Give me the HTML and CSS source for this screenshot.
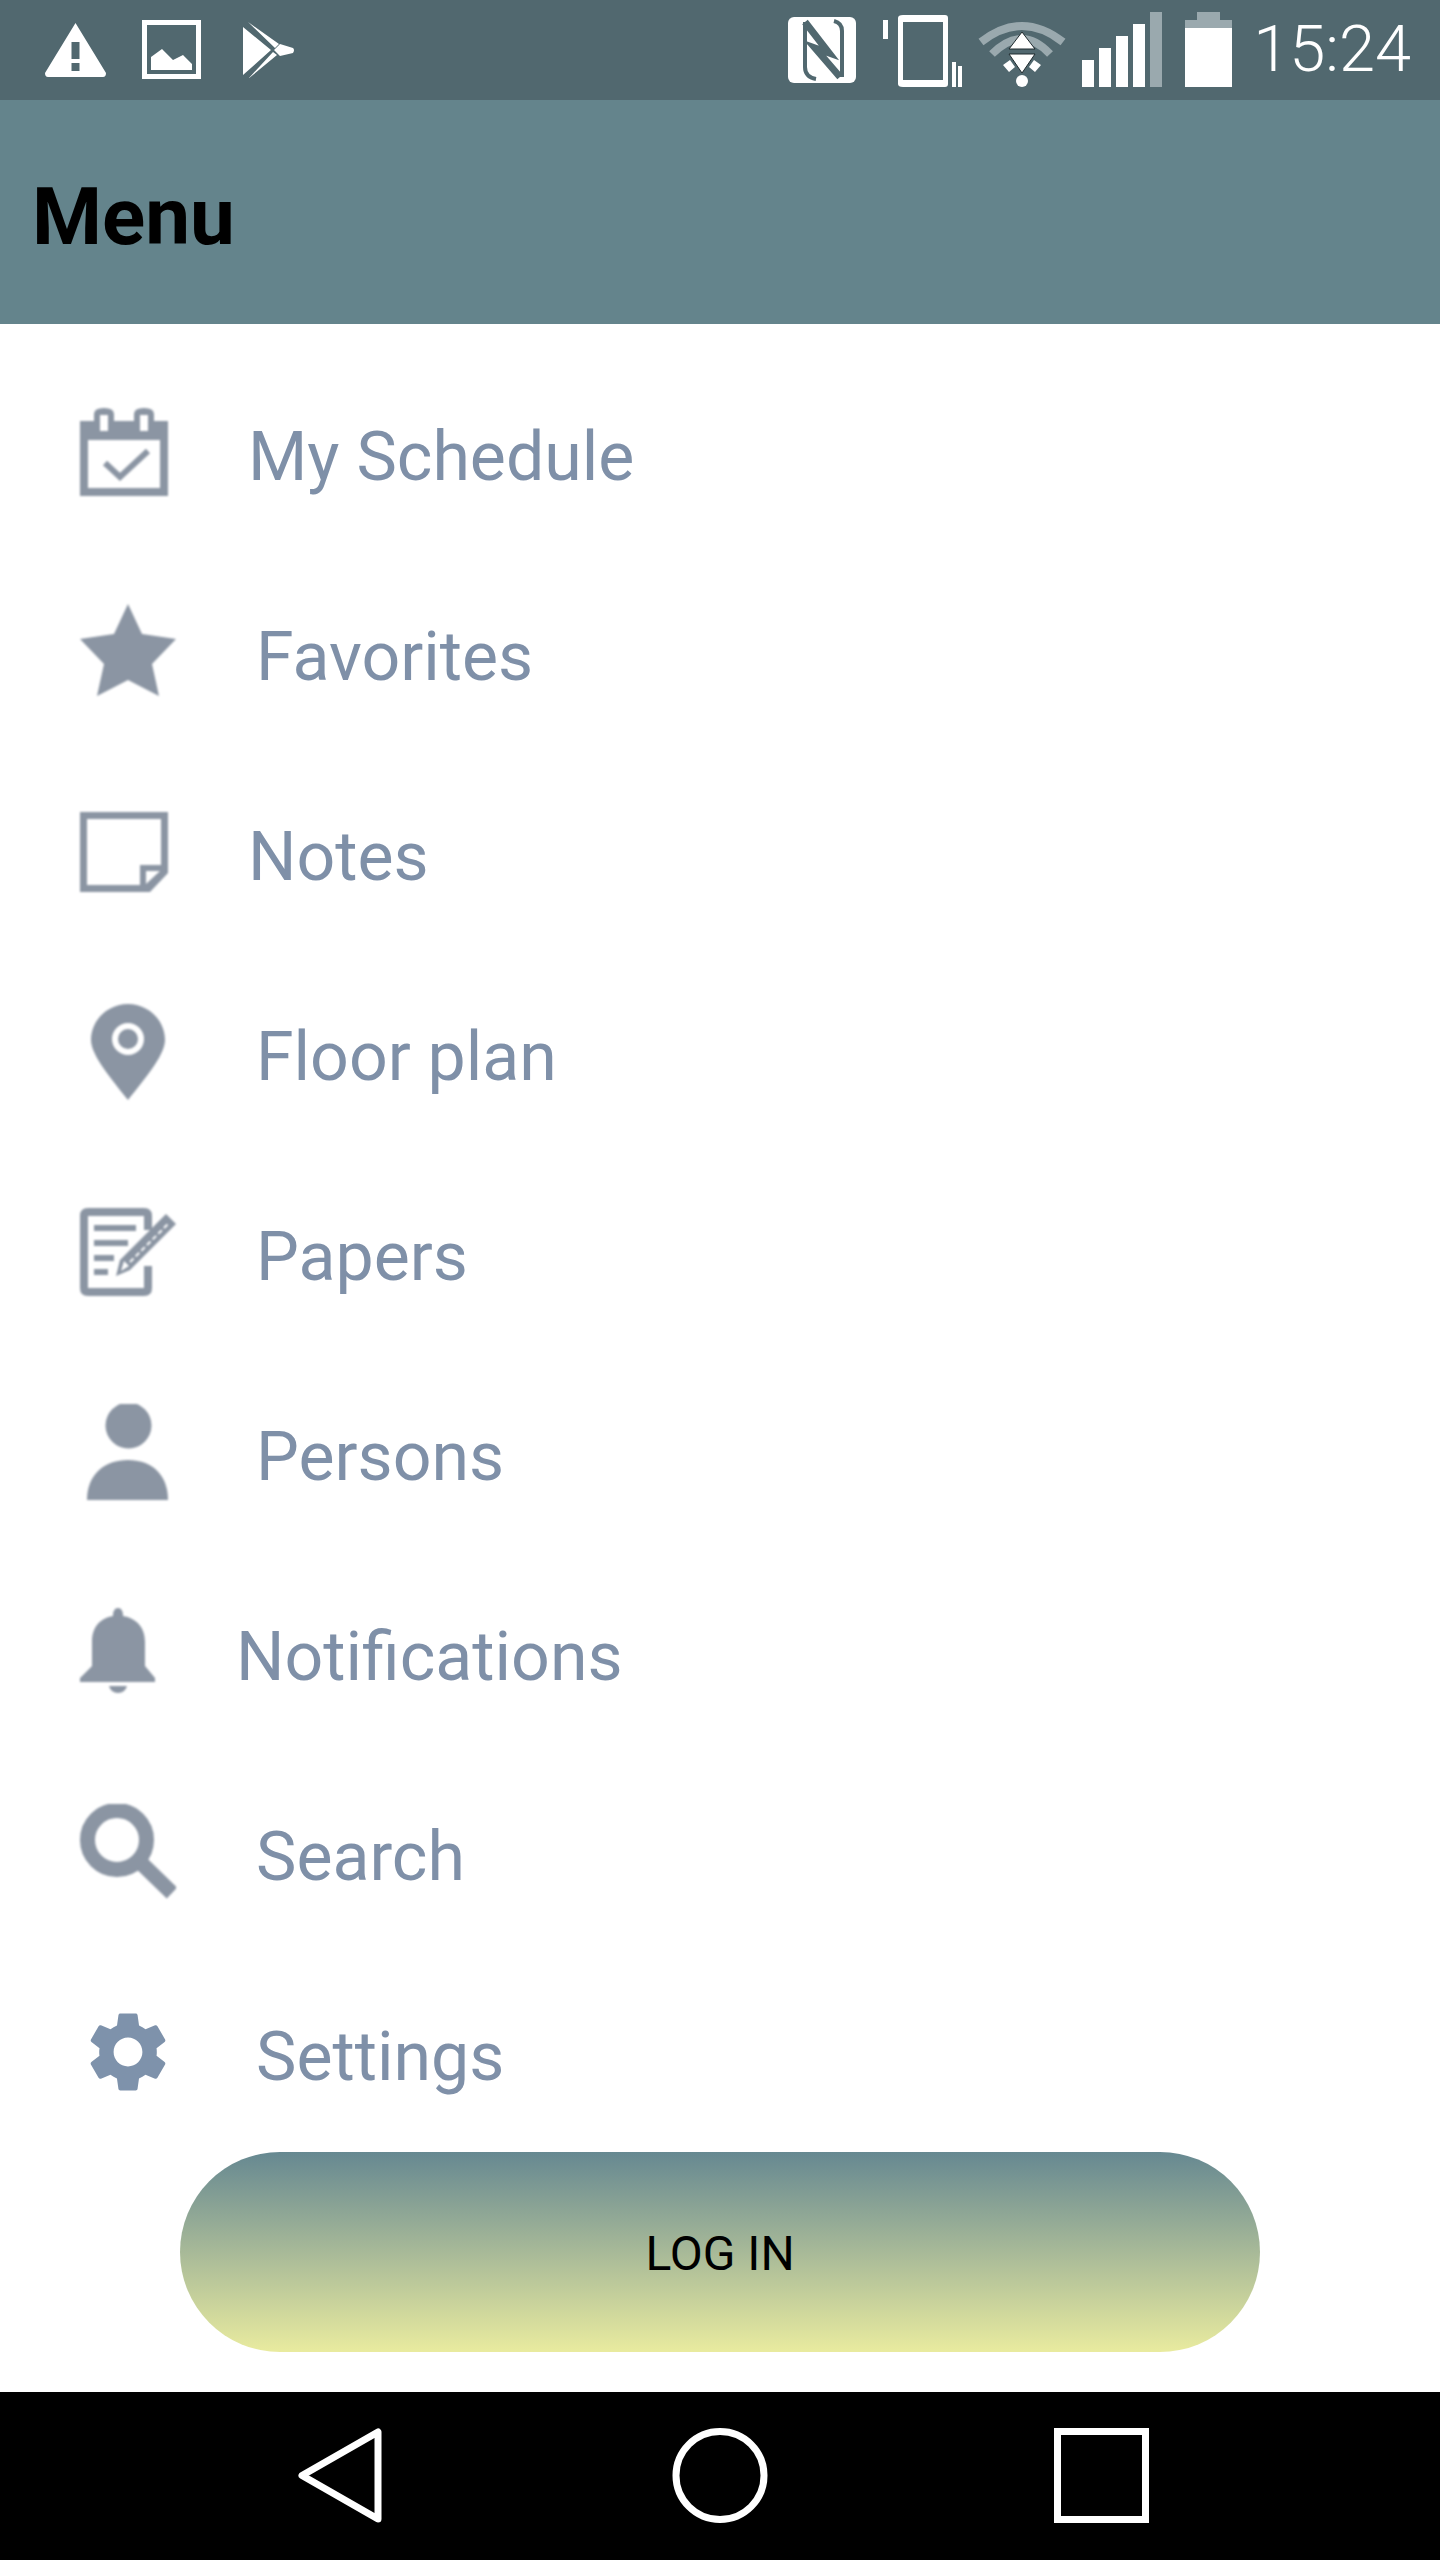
FILE: index.html
```html
<!DOCTYPE html>
<html>
<head>
  <title>Menu</title>
  <meta name="viewport" content="width=device-width, initial-scale=1.0">
  <link rel="stylesheet" href="styles.css">
</head>
<body>
  <div id="phone">
    <div class="status-bar">
      <div class="status-left">
        <svg class="st-warn" viewBox="0 0 61 54"><path fill="#fff" fill-rule="evenodd" d="M30.5 0 L61 50 Q61 54 58 54 L3 54 Q0 54 0 50 Z M26.500 19 L34.500 19 L34.500 36 L26.500 36 Z M26.500 40 L34.500 40 L34.500 48 L26.500 48 Z"/></svg>
        <svg class="st-pic" viewBox="0 0 59 59"><path fill="#fff" fill-rule="evenodd" d="M0 0H59V59H0Z M5 5V54H54V5Z"/><path fill="#fff" d="M9 50V37L20 29L31 40L41 35L50 44V50Z"/></svg>
        <svg class="st-play" viewBox="0 0 53 56"><path fill="#fff" d="M1 5 L29 28 L1 53 Z M6 0 L37 22 L33 26 Z M6 57 L35 33 L31 30 Z M38 22 L51 26 Q53 28 51 31 L38 34 L32 28 Z"/></svg>
      </div>
      <div class="status-right">
        <svg class="st-nfc" viewBox="0 0 68 66"><rect fill="#fff" width="68" height="66" rx="6"/><path fill="none" stroke="#51686f" stroke-width="4" d="M17 5V50Q17 60 28 62M46 4Q54 6 54 14V60"/><path fill="none" stroke="#51686f" stroke-width="7" d="M17 5L41 36L27 31L52 60"/></svg>
        <svg class="st-vib" viewBox="0 0 79 72"><path fill="#fff" fill-rule="evenodd" d="M20 0H62Q65 0 65 3V69Q65 72 62 72H20Q15 72 15 69V3Q15 0 20 0ZM20 7V65H60V7Z"/><path fill="#fff" d="M0 5H5V24H0Z M69 47H73V72H69Z M75 51H79V72H75Z"/></svg>
        <svg class="st-wifi" viewBox="0 0 90 66"><path fill="none" stroke="#9aa9ae" stroke-width="8" d="M4 21 Q45 -11 86 21 M15 33 Q45 3 73 33"/><path fill="#fff" stroke="#1f2a2e" stroke-width="1" d="M45 11 L58 28 H32Z M32 33 H58 L45 52Z"/><path fill="#fff" d="M26 44 L33 39 L38 46 L32 51Z M64 44 L57 39 L52 46 L58 51Z"/><circle fill="#fff" cx="45" cy="60" r="6"/></svg>
        <div class="st-signal">
          <span class="bar bar-1"></span>
          <span class="bar bar-2"></span>
          <span class="bar bar-3"></span>
          <span class="bar bar-4"></span>
          <span class="bar bar-5"></span>
        </div>
        <div class="st-battery">
          <span class="bat-cap"></span>
          <span class="bat-top"></span>
          <span class="bat-body"></span>
        </div>
        <span class="st-time">15:24</span>
      </div>
    </div>

    <div class="app-header">
      <h1>Menu</h1>
    </div>

    <div class="menu-list">
      <a class="menu-item">
        <svg class="icon-88" viewBox="0 0 88 88"><path fill="#8b95a3" fill-rule="evenodd" d="M14 13V6Q14 0 24 0Q34 0 34 6V13H54V6Q54 0 64 0Q74 0 74 6V13H88V88H0V13ZM20 7V23H28V7ZM60 7V23H68V7ZM8 32V80H80V32Z"/><path fill="none" stroke="#8b95a3" stroke-width="6" d="M25 55L40 69L68 43"/></svg>
        <span>My Schedule</span>
      </a>
      <a class="menu-item">
        <svg class="icon-96" viewBox="0 0 96 96"><path fill="#8b95a3" d="M48 0L62 30L96 35L72 60L79 92L48 76L17 92L24 60L0 35L34 30Z"/></svg>
        <span>Favorites</span>
      </a>
      <a class="menu-item">
        <svg class="icon-88" viewBox="0 0 88 88"><path fill="#8b95a3" fill-rule="evenodd" d="M0 4H88V65L70 84H0ZM7 11V77H60V57H81V11Z"/><path fill="#fff" d="M66 63H80L66 76Z"/></svg>
        <span>Notes</span>
      </a>
      <a class="menu-item">
        <svg class="icon-96" viewBox="0 0 96 96"><path fill="#8b95a3" fill-rule="evenodd" d="M48 0C68 0 85 16 85 36C85 52 62 78 48 96C34 78 11 52 11 36C11 16 28 0 48 0ZM48 19A16 16 0 1 0 48 51A16 16 0 1 0 48 19ZM48 25A10 10 0 1 1 48 45A10 10 0 1 1 48 25Z"/></svg>
        <span>Floor plan</span>
      </a>
      <a class="menu-item">
        <svg class="icon-96" viewBox="0 0 96 88"><path fill="none" stroke="#8b95a3" stroke-width="8" d="M68 22V8Q68 4 64 4H8Q4 4 4 8V80Q4 84 8 84H64Q68 84 68 80V58"/><path fill="none" stroke="#8b95a3" stroke-width="6" d="M14 20H56M14 35H48M14 50H34M14 64H28"/><path fill="#8b95a3" d="M86 6L96 16L50 62L36 68L40 52Z"/><path fill="none" stroke="#fff" stroke-width="2" stroke-dasharray="5 3" d="M50 54L88 16"/><path fill="#fff" d="M44 53L49 58L41 63Z"/></svg>
        <span>Papers</span>
      </a>
      <a class="menu-item">
        <svg class="icon-96" viewBox="0 0 96 96"><circle fill="#8b95a3" cx="48.500" cy="21.500" r="23"/><path fill="#8b95a3" d="M7 96C7 70 25 56 48 56C71 56 88 70 88 96Z"/></svg>
        <span>Persons</span>
      </a>
      <a class="menu-item">
        <svg class="icon-76" viewBox="0 0 76 88"><path fill="#8b95a3" d="M33 8Q33 0 38 0Q43 0 43 8C55 10 65 18 65 34V58L75 70V74H0V70L12 58V34C12 18 21 10 33 8Z"/><path fill="#8b95a3" d="M29 78H47Q45 85 38 85Q31 85 29 78Z"/></svg>
        <span>Notifications</span>
      </a>
      <a class="menu-item">
        <svg class="icon-96" viewBox="0 0 96 96"><circle fill="none" stroke="#8b95a3" stroke-width="15" cx="37" cy="36" r="29.500"/><path fill="none" stroke="#8b95a3" stroke-width="15" d="M60 58L92 89"/></svg>
        <span>Search</span>
      </a>
      <a class="menu-item">
        <svg class="icon-96 icon-crisp" viewBox="0 0 24 24"><path fill="#7e92ab" d="M19.140 12.940c.04-.3.06-.61.06-.94 0-.32-.02-.64-.07-.94l2.030-1.580c.18-.14.23-.41.12-.61l-1.920-3.320c-.12-.22-.37-.29-.59-.22l-2.390.96c-.5-.38-1.030-.7-1.620-.94l-.36-2.540c-.04-.24-.24-.41-.48-.41h-3.840c-.24 0-.43.17-.47.41l-.36 2.540c-.59.24-1.130.57-1.620.94l-2.390-.96c-.22-.08-.47 0-.59.22L2.740 8.870c-.12.21-.08.47.12.61l2.030 1.580c-.05.3-.09.63-.09.94s.02.64.07.94l-2.030 1.580c-.18.14-.23.41-.12.61l1.920 3.320c.12.22.37.29.59.22l2.390-.96c.5.38 1.030.7 1.620.94l.36 2.540c.05.24.24.41.48.41h3.840c.24 0 .44-.17.47-.41l.36-2.540c.59-.24 1.130-.56 1.620-.94l2.390.96c.22.08.47 0 .59-.22l1.920-3.320c.12-.22.07-.47-.12-.61l-2.010-1.580zM12 15.600c-1.980 0-3.600-1.620-3.600-3.600s1.620-3.600 3.600-3.600 3.600 1.620 3.600 3.600-1.620 3.600-3.600 3.600z"/></svg>
        <span>Settings</span>
      </a>
    </div>

    <div class="login-area">
      <button type="button" class="login-btn">Log in</button>
    </div>

    <div class="nav-bar">
      <svg class="nav-back" viewBox="0 0 85 95"><path fill="none" stroke="#fff" stroke-width="7" stroke-linejoin="round" d="M81 4V91L5 47.500Z"/></svg>
      <svg class="nav-home" viewBox="0 0 96 95"><ellipse fill="none" stroke="#fff" stroke-width="7" cx="48" cy="47.500" rx="44" ry="44"/></svg>
      <svg class="nav-recent" viewBox="0 0 95 95"><path fill="none" stroke="#fff" stroke-width="7" d="M3.500 3.500H91.500V91.500H3.500Z"/></svg>
    </div>
  </div>
</body>
</html>
```
FILE: styles.css
```css
* {
  box-sizing: border-box;
}

body {
  margin: 0;
  background-color: #fff;
  font-family: Roboto, "Liberation Sans", sans-serif;
}

#phone {
  width: 1440px;
  height: 2560px;
  display: flex;
  flex-direction: column;
  overflow: hidden;
}

/* Status bar */
.status-bar {
  height: 100px;
  flex: none;
  background-color: #51686f;
  display: flex;
  justify-content: space-between;
  padding: 12px 29px 13px 45px;
}

.status-left {
  display: flex;
  align-items: center;
}

.status-right {
  display: flex;
  align-items: flex-end;
}

.st-warn {
  width: 61px;
  height: 54px;
  margin-right: 36px;
}

.st-pic {
  width: 59px;
  height: 59px;
  margin-right: 41px;
}

.st-play {
  width: 53px;
  height: 56px;
}

.st-nfc {
  width: 68px;
  height: 66px;
  margin-right: 27px;
  margin-bottom: 4px;
}

.st-vib {
  width: 79px;
  height: 72px;
  margin-right: 15px;
}

.st-wifi {
  width: 90px;
  height: 66px;
  margin-right: 15px;
}

.st-signal {
  display: flex;
  align-items: flex-end;
  gap: 5px;
  margin-right: 23px;
}

.bar {
  display: block;
  width: 12px;
  background-color: #fff;
}

.bar-1 { height: 27px; }
.bar-2 { height: 39px; }
.bar-3 { height: 51px; }
.bar-4 { height: 63px; }
.bar-5 { height: 75px; background-color: #9aa9ae; }

.st-battery {
  width: 47px;
  display: flex;
  flex-direction: column;
  align-items: center;
  margin-right: 21px;
}

.bat-cap {
  width: 23px;
  height: 8px;
  background-color: #9aa9ae;
}

.bat-top {
  width: 100%;
  height: 8px;
  background-color: #9aa9ae;
}

.bat-body {
  width: 100%;
  height: 59px;
  background-color: #fff;
}

.st-time {
  color: #fff;
  font-size: 65px;
  font-weight: 300;
  line-height: 75px;
  align-self: flex-end;
}

/* Header */
.app-header {
  height: 224px;
  flex: none;
  background-color: #64848c;
  display: flex;
  align-items: center;
  padding: 9px 0 0 32px;
}

.app-header h1 {
  margin: 0;
  color: #000;
  font-size: 80px;
  font-weight: 700;
}

/* Menu */
.menu-list {
  height: 1828px;
  flex: none;
  overflow: hidden;
  padding: 33px 0 0 80px;
}

.menu-item {
  height: 200px;
  display: flex;
  align-items: center;
  gap: 80px;
  color: #7f90a8;
  font-size: 68px;
}

.menu-item svg {
  flex: none;
  filter: blur(1px);
  margin-top: -10px;
}

.menu-item .icon-crisp {
  filter: none;
}

.icon-88 {
  width: 88px;
  height: 88px;
}

.icon-96 {
  width: 96px;
  height: 96px;
}

.icon-76 {
  width: 76px;
  height: 88px;
}

/* Log in */
.login-area {
  height: 240px;
  flex: none;
  padding: 0 180px 40px 180px;
}

.login-btn {
  width: 100%;
  height: 200px;
  border: none;
  border-radius: 100px;
  padding-top: 4px;
  background: linear-gradient(#668891, #e9eb9f);
  color: #000;
  font-family: Roboto, sans-serif;
  font-size: 48px;
  text-transform: uppercase;
  cursor: pointer;
}

/* Nav bar */
.nav-bar {
  flex: 1;
  background-color: #000;
  display: flex;
  align-items: flex-start;
  justify-content: space-between;
  padding: 36px 291px 0 297px;
}

.nav-back {
  width: 85px;
  height: 95px;
}

.nav-home {
  width: 96px;
  height: 95px;
  margin-left: 4px;
}

.nav-recent {
  width: 95px;
  height: 95px;
}
```
